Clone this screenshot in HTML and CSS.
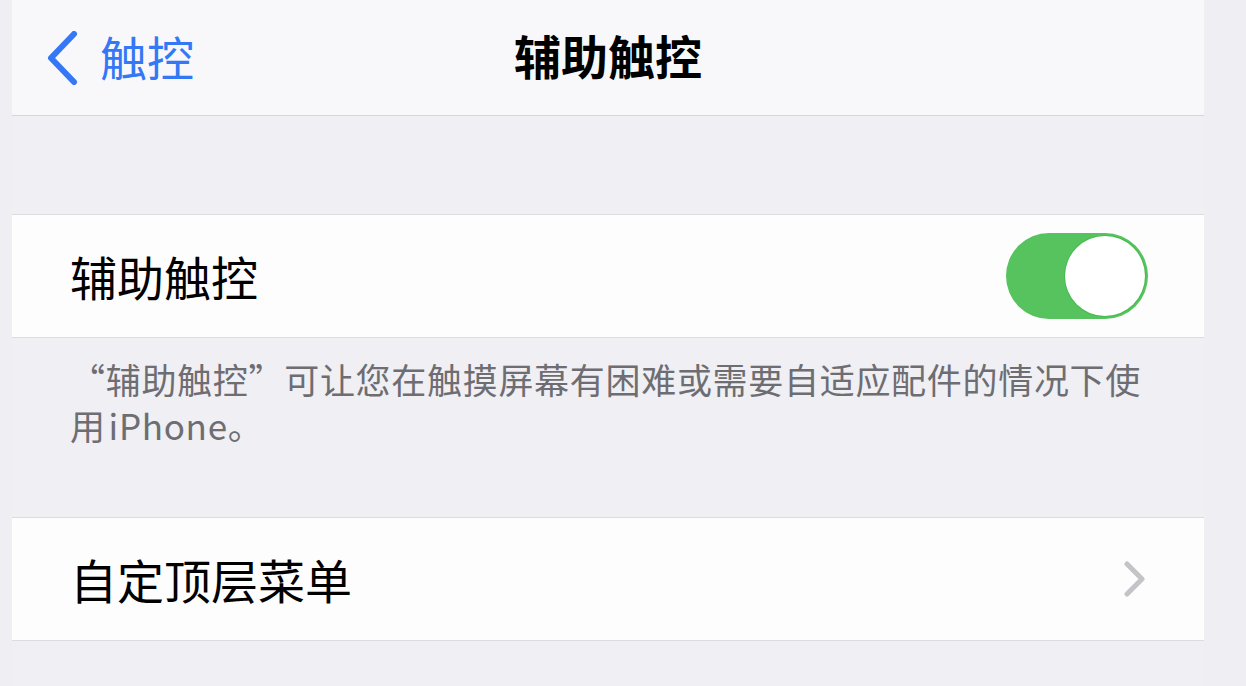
FILE: index.html
```html
<!DOCTYPE html>
<html lang="zh-CN">
<head>
<meta charset="utf-8">
<link rel="stylesheet" href="styles.css">
</head>
<body>
<div class="screen">
  <header class="nav">
    <div class="back">
      <svg class="back-chev" width="32" height="54" viewBox="0 0 32 54"><path d="M28 3 L5 27 L28 51" fill="none" stroke="#3478f6" stroke-width="6" stroke-linecap="round" stroke-linejoin="round"/></svg>
      <span class="back-text">触控</span>
    </div>
    <div class="title">辅助触控</div>
    <div class="nav-side"></div>
  </header>

  <section class="group first">
    <div class="row">
      <span class="label">辅助触控</span>
      <span class="toggle"><span class="knob"></span></span>
    </div>
  </section>
  <p class="footer">“辅助触控”可让您在触摸屏幕有困难或需要自适应配件的情况下使用&#8202;iPhone。</p>

  <section class="group second">
    <div class="row">
      <span class="label">自定顶层菜单</span>
      <svg class="chev" width="22" height="36" viewBox="0 0 22 36"><path d="M3 3 L18 18 L3 33" fill="none" stroke="#c4c4c8" stroke-width="5" stroke-linecap="round" stroke-linejoin="round"/></svg>
    </div>
  </section>
</div>
</body>
</html>
```

FILE: styles.css
```css
html, body {
  margin: 0;
  padding: 0;
  background: #eeeef3;
  font-family: "Noto Sans CJK SC", "Noto Sans", sans-serif;
}
.screen {
  margin: 0 42px 0 12px;
  width: 1192px;
  height: 686px;
  background: #efeff4;
  display: flex;
  flex-direction: column;
}
.nav {
  height: 115px;
  background: #f8f8fa;
  border-bottom: 1px solid #d6d6da;
  display: grid;
  grid-template-columns: 1fr auto 1fr;
  align-items: center;
}
.back {
  display: flex;
  align-items: center;
  padding-left: 34px;
  gap: 22px;
  color: #3478f6;
}
.back-chev { display: block; }
.back-text {
  font-size: 47px;
  line-height: 1;
  margin-top: -4px;
}
.title {
  font-size: 47px;
  font-weight: 700;
  color: #000;
  line-height: 1;
  margin-top: -6px;
}
.group {
  background: #fdfdfe;
  border-top: 1px solid #dcdce0;
  border-bottom: 1px solid #dcdce0;
}
.group.first { margin-top: 98px; }
.group.second { margin-top: 69px; }
.row {
  height: 122px;
  display: flex;
  align-items: center;
  justify-content: space-between;
  padding: 0 56px 0 58px;
}
.label {
  font-size: 47px;
  color: #000;
  line-height: 1;
  margin-top: -2px;
}
.toggle {
  width: 142px;
  height: 86px;
  border-radius: 43px;
  background: #57c35e;
  display: flex;
  align-items: center;
  justify-content: flex-end;
  padding: 0 3px;
  box-sizing: border-box;
}
.knob {
  width: 80px;
  height: 80px;
  border-radius: 50%;
  background: #fff;
  box-shadow: 0 0 0 1px #45bb4e;
}
.chev { display: block; margin-right: 2px; }
.footer {
  margin: 0;
  padding: 18px 40px 0 58px;
  font-size: 35px;
  letter-spacing: 0.7px;
  line-height: 46px;
  color: #6d6d72;
}
```
